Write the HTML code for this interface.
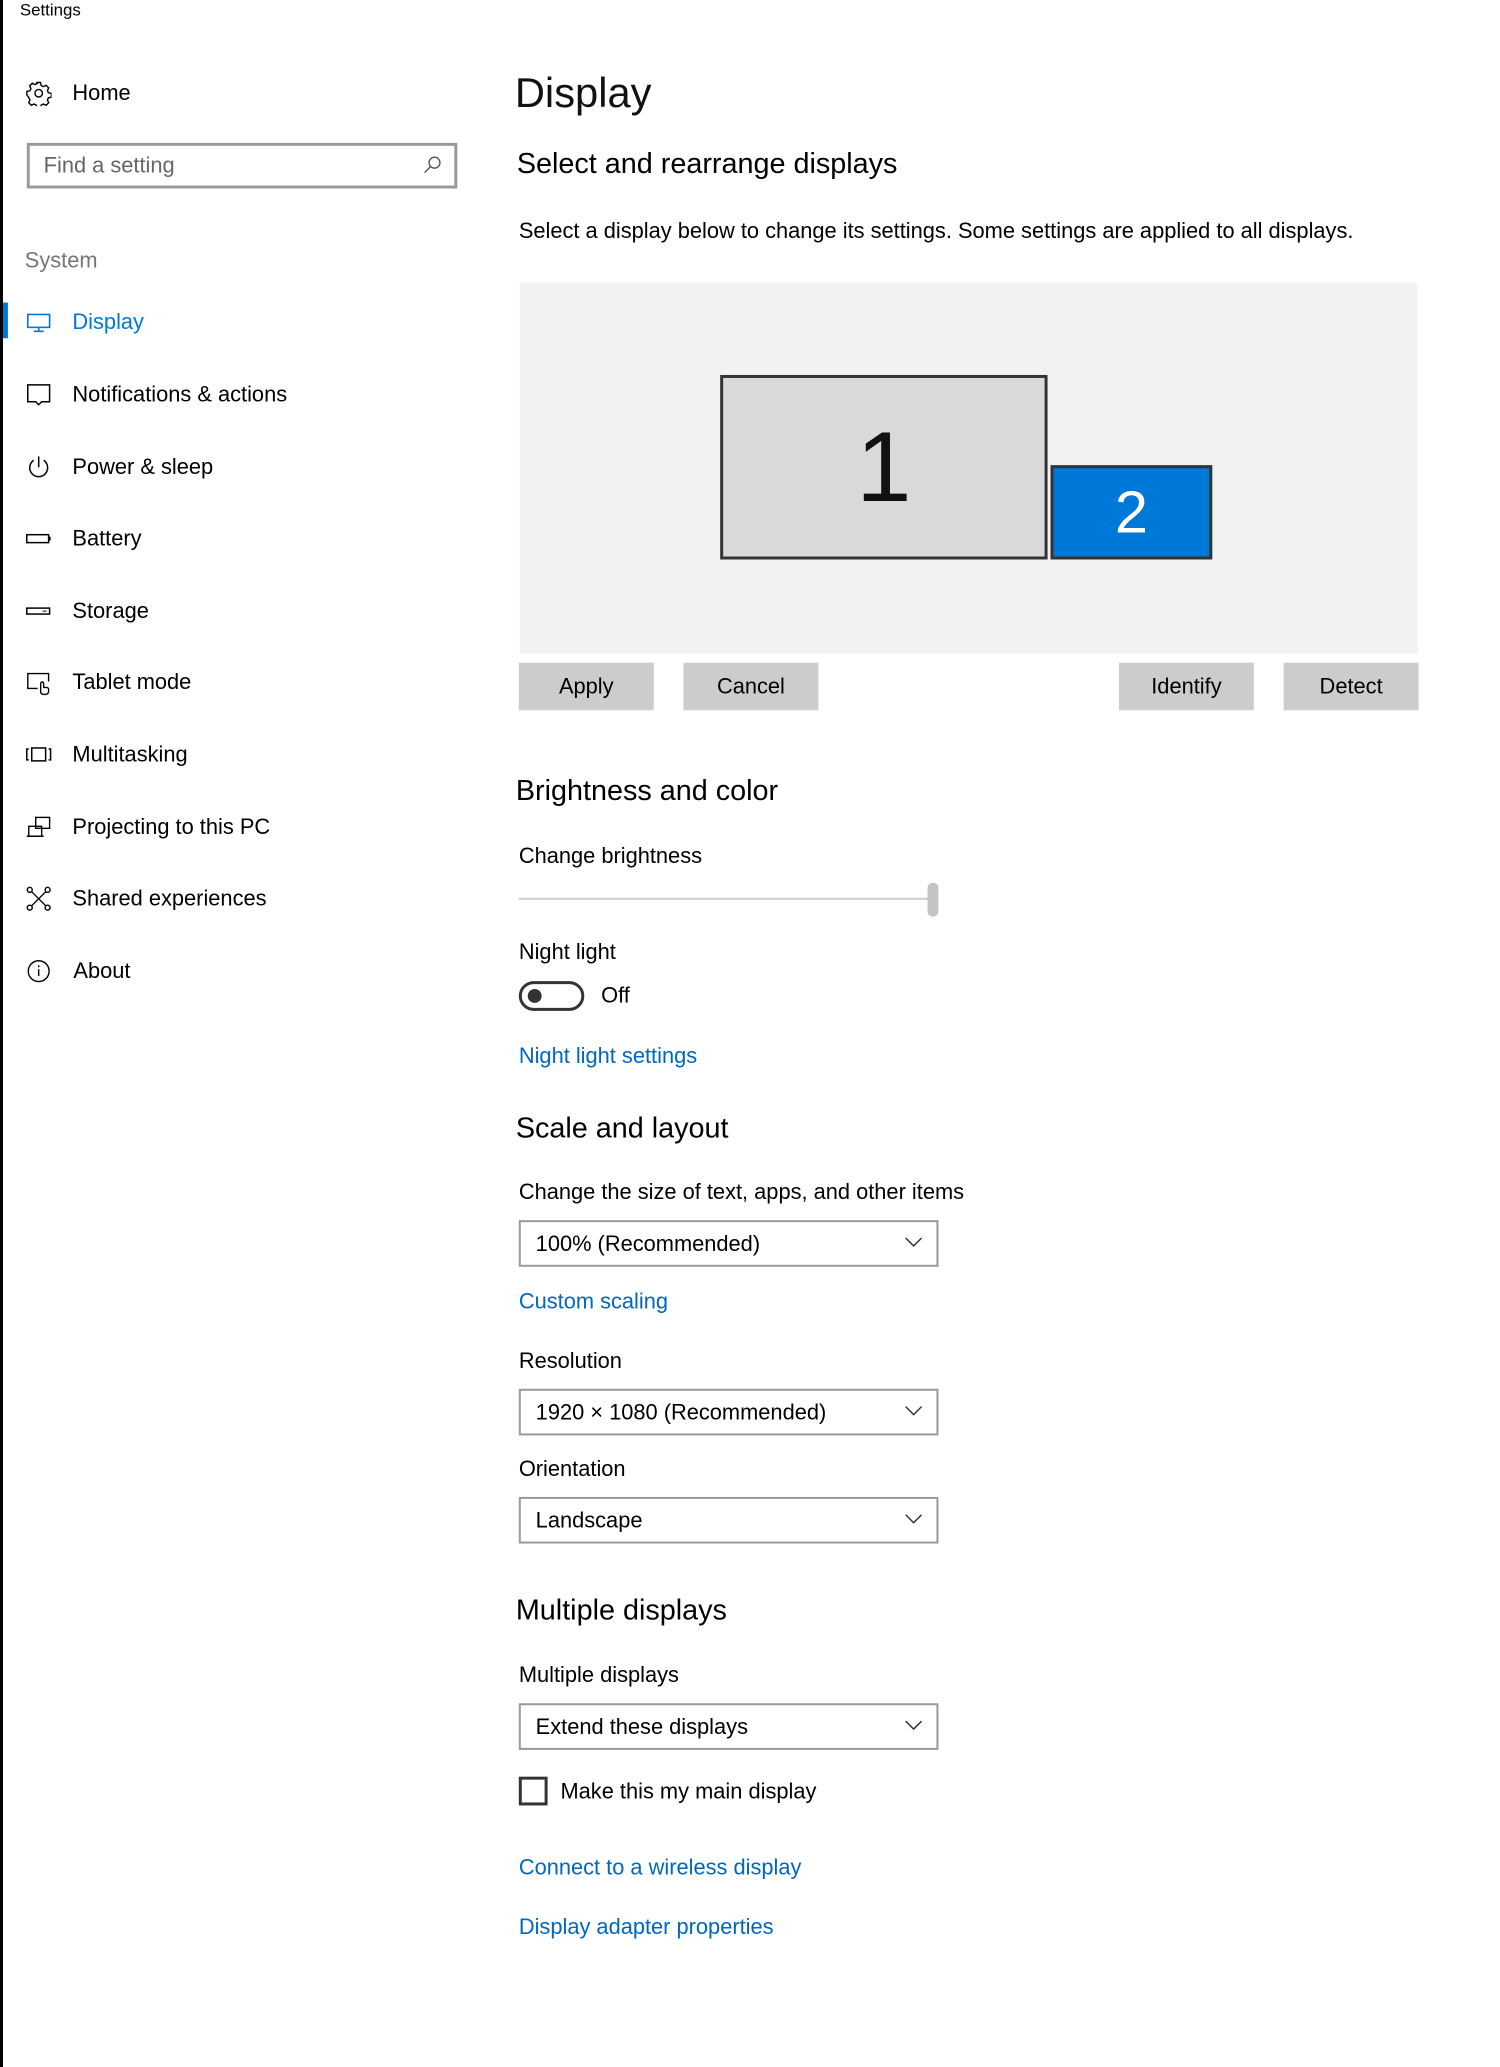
<!DOCTYPE html>
<html><head><meta charset="utf-8"><style>
*{margin:0;padding:0;box-sizing:border-box}
body{width:1500px;height:2067px;background:#fff;position:relative;overflow:hidden;font-family:"Segoe UI","Liberation Sans",sans-serif;color:#000}
#w{position:absolute;left:0;top:0;width:1512px;height:2084px;transform:scale(0.992);transform-origin:0 0}
.t{position:absolute;transform:translateY(-50%);white-space:nowrap;line-height:1.2}
.n{font-size:22px;left:73px}
.ic{position:absolute;left:26px;width:26px;height:26px;transform:translateY(-50%)}
.b{font-size:22px}
.h{font-size:29px}
.l{font-size:22px;color:#0067c0}
.btn{position:absolute;top:668px;height:48px;width:136px;background:#ccc;font-size:22px;display:flex;align-items:center;justify-content:center}
.dd{position:absolute;left:523px;width:423px;height:47px;border:2px solid #999;font-size:22px;padding-left:15px;display:flex;align-items:center}
.dd svg{position:absolute;right:14px;top:14px}
</style></head><body>
<div style="position:absolute;left:0;top:0;width:3px;height:2067px;background:#000"></div>
<div id="w">
<div class="t" style="left:20px;top:11px;font-size:17px">Settings</div>

<svg class="ic" style="top:94px" viewBox="0 0 24 24" fill="none" stroke="#000" stroke-width="1.3"><circle cx="12" cy="12" r="3.5"/><path d="M10.3 2h3.4l.6 2.8 2 1 2.6-1.2 2.4 2.4-1.2 2.6 1 2 2.8.6v3.4l-2.8.6-1 2 1.2 2.6-2.4 2.4-2.6-1.2-2 1-.6 2.8h-3.4l-.6-2.8-2-1-2.6 1.2-2.4-2.4 1.2-2.6-1-2L1 13.7v-3.4l2.8-.6 1-2L3.6 5.1 6 2.7l2.6 1.2 2-1z"/></svg>
<div class="t n" style="top:94px">Home</div>

<div style="position:absolute;left:27px;top:144px;width:434px;height:46px;border:3px solid #999"></div>
<div class="t" style="left:44px;top:167px;font-size:22px;color:#666">Find a setting</div>
<svg style="position:absolute;left:425px;top:155px" width="22" height="22" viewBox="0 0 22 22" fill="none" stroke="#555" stroke-width="1.4"><circle cx="13" cy="9" r="5.5"/><path d="M9 13l-6 6"/></svg>

<div class="t" style="left:25px;top:263px;font-size:22px;color:#767676">System</div>

<div style="position:absolute;left:3px;top:305px;width:5px;height:36px;background:#0078d7"></div>
<svg class="ic" style="top:325px" viewBox="0 0 26 26" fill="none" stroke="#0078d7" stroke-width="1.6"><rect x="2" y="5" width="22" height="13"/><path d="M13 18v4M8 22h10"/></svg>
<div class="t n" style="top:325px;color:#0078d7">Display</div>

<svg class="ic" style="top:398px" viewBox="0 0 26 26" fill="none" stroke="#000" stroke-width="1.5"><path d="M2 3h22v17H16l-3 3-3-3H2z"/></svg>
<div class="t n" style="top:398px">Notifications &amp; actions</div>

<svg class="ic" style="top:471px" viewBox="0 0 26 26" fill="none" stroke="#000" stroke-width="1.5"><path d="M8 6a9 9 0 1 0 10 0M13 2v11"/></svg>
<div class="t n" style="top:471px">Power &amp; sleep</div>

<svg class="ic" style="top:543px" viewBox="0 0 26 26" fill="none" stroke="#000" stroke-width="1.5"><rect x="1" y="9" width="22" height="8"/><path d="M24 11v4" stroke-width="2"/></svg>
<div class="t n" style="top:543px">Battery</div>

<svg class="ic" style="top:616px" viewBox="0 0 26 26" fill="none" stroke="#000" stroke-width="1.5"><rect x="1" y="10" width="23" height="6"/><path d="M17 13h4" stroke-width="1"/></svg>
<div class="t n" style="top:616px">Storage</div>

<svg class="ic" style="top:688px" viewBox="0 0 26 26" fill="none" stroke="#000" stroke-width="1.4"><path d="M12 19H2V4h21v8"/><path d="M15 23v-9a1.5 1.5 0 0 1 3 0v4h3a2 2 0 0 1 2 2v2a3 3 0 0 1-3 3h-2a3 3 0 0 1-3-2z"/></svg>
<div class="t n" style="top:688px">Tablet mode</div>

<svg class="ic" style="top:761px" viewBox="0 0 26 26" fill="none" stroke="#000" stroke-width="1.5"><rect x="6" y="6" width="14" height="13"/><path d="M3 7H1v11h2M23 7h2v11h-2"/></svg>
<div class="t n" style="top:761px">Multitasking</div>

<svg class="ic" style="top:834px" viewBox="0 0 26 26" fill="none" stroke="#000" stroke-width="1.4"><rect x="10" y="3" width="14" height="11"/><path d="M3 22V12h13v10zM1 22h17"/></svg>
<div class="t n" style="top:834px">Projecting to this PC</div>

<svg class="ic" style="top:906px" viewBox="0 0 26 26" fill="none" stroke="#000" stroke-width="1.4"><circle cx="4" cy="4" r="2.5"/><circle cx="22" cy="4" r="2.5"/><circle cx="4" cy="22" r="2.5"/><circle cx="22" cy="22" r="2.5"/><path d="M6 6l14 14M20 6L6 20"/></svg>
<div class="t n" style="top:906px">Shared experiences</div>

<svg class="ic" style="top:979px" viewBox="0 0 26 26" fill="none" stroke="#000" stroke-width="1.4"><circle cx="13" cy="13" r="10.5"/><path d="M13 11v7M13 7v2"/></svg>
<div class="t n" style="top:979px;left:74px">About</div>

<div class="t" style="left:519px;top:94px;font-size:42px;color:#111">Display</div>
<div class="t h" style="left:521px;top:166px">Select and rearrange displays</div>
<div class="t b" style="left:523px;top:233px">Select a display below to change its settings. Some settings are applied to all displays.</div>

<div style="position:absolute;left:524px;top:285px;width:905px;height:374px;background:#f2f2f2"></div>
<div style="position:absolute;left:726px;top:378px;width:330px;height:186px;background:#d9d9d9;border:3px solid #333;display:flex;align-items:center;justify-content:center;font-size:100px;color:#111">1</div>
<div style="position:absolute;left:1059px;top:469px;width:163px;height:95px;background:#0078d7;border:3px solid #333;display:flex;align-items:center;justify-content:center;font-size:60px;color:#fff">2</div>

<div class="btn" style="left:523px">Apply</div>
<div class="btn" style="left:689px">Cancel</div>
<div class="btn" style="left:1128px">Identify</div>
<div class="btn" style="left:1294px">Detect</div>

<div class="t h" style="left:520px;top:798px">Brightness and color</div>
<div class="t b" style="left:523px;top:863px">Change brightness</div>
<div style="position:absolute;left:523px;top:905px;width:415px;height:2px;background:#ccc"></div>
<div style="position:absolute;left:935px;top:890px;width:11px;height:34px;background:#c4c4c4;border-radius:5px"></div>

<div class="t b" style="left:523px;top:960px">Night light</div>
<div style="position:absolute;left:523px;top:989px;width:66px;height:30px;border:3px solid #333;border-radius:15px"></div>
<div style="position:absolute;left:532px;top:997px;width:14px;height:14px;border-radius:50%;background:#333"></div>
<div class="t b" style="left:606px;top:1004px">Off</div>
<div class="t l" style="left:523px;top:1065px">Night light settings</div>

<div class="t h" style="left:520px;top:1138px">Scale and layout</div>
<div class="t b" style="left:523px;top:1202px">Change the size of text, apps, and other items</div>
<div class="dd" style="top:1230px">100% (Recommended)<svg width="18" height="12" viewBox="0 0 18 12" fill="none" stroke="#333" stroke-width="1.5"><path d="M1 2l8 8 8-8"/></svg></div>
<div class="t l" style="left:523px;top:1312px">Custom scaling</div>
<div class="t b" style="left:523px;top:1372px">Resolution</div>
<div class="dd" style="top:1400px">1920 × 1080 (Recommended)<svg width="18" height="12" viewBox="0 0 18 12" fill="none" stroke="#333" stroke-width="1.5"><path d="M1 2l8 8 8-8"/></svg></div>
<div class="t b" style="left:523px;top:1481px">Orientation</div>
<div class="dd" style="top:1509px">Landscape<svg width="18" height="12" viewBox="0 0 18 12" fill="none" stroke="#333" stroke-width="1.5"><path d="M1 2l8 8 8-8"/></svg></div>

<div class="t h" style="left:520px;top:1624px">Multiple displays</div>
<div class="t b" style="left:523px;top:1689px">Multiple displays</div>
<div class="dd" style="top:1717px">Extend these displays<svg width="18" height="12" viewBox="0 0 18 12" fill="none" stroke="#333" stroke-width="1.5"><path d="M1 2l8 8 8-8"/></svg></div>
<div style="position:absolute;left:523px;top:1791px;width:29px;height:29px;border:3px solid #333"></div>
<div class="t b" style="left:565px;top:1806px">Make this my main display</div>
<div class="t l" style="left:523px;top:1883px">Connect to a wireless display</div>
<div class="t l" style="left:523px;top:1943px">Display adapter properties</div>
</div>
</body></html>
